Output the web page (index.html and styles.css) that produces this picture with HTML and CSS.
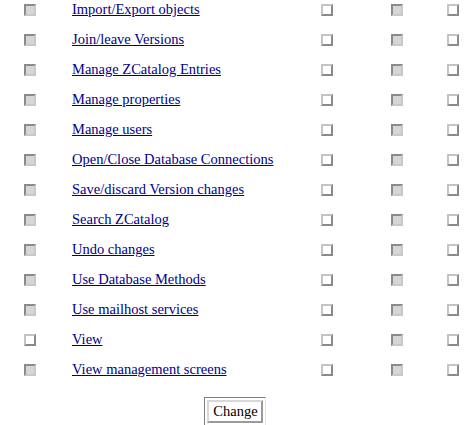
FILE: index.html
```html
<!DOCTYPE html>
<html>
<head>
<meta charset="utf-8">
<link rel="stylesheet" href="styles.css">
</head>
<body>
<div class="perms">
  <div class="row"><span class="cb on"></span><a href="#">Import/Export objects</a><span class="cb"></span><span class="cb on"></span><span class="cb"></span></div>
  <div class="row"><span class="cb on"></span><a href="#">Join/leave Versions</a><span class="cb"></span><span class="cb on"></span><span class="cb"></span></div>
  <div class="row"><span class="cb on"></span><a href="#">Manage ZCatalog Entries</a><span class="cb"></span><span class="cb on"></span><span class="cb"></span></div>
  <div class="row"><span class="cb on"></span><a href="#">Manage properties</a><span class="cb"></span><span class="cb on"></span><span class="cb"></span></div>
  <div class="row"><span class="cb on"></span><a href="#">Manage users</a><span class="cb"></span><span class="cb on"></span><span class="cb"></span></div>
  <div class="row"><span class="cb on"></span><a href="#">Open/Close Database Connections</a><span class="cb"></span><span class="cb on"></span><span class="cb"></span></div>
  <div class="row"><span class="cb on"></span><a href="#">Save/discard Version changes</a><span class="cb"></span><span class="cb on"></span><span class="cb"></span></div>
  <div class="row"><span class="cb on"></span><a href="#">Search ZCatalog</a><span class="cb"></span><span class="cb on"></span><span class="cb"></span></div>
  <div class="row"><span class="cb on"></span><a href="#">Undo changes</a><span class="cb"></span><span class="cb on"></span><span class="cb"></span></div>
  <div class="row"><span class="cb on"></span><a href="#">Use Database Methods</a><span class="cb"></span><span class="cb on"></span><span class="cb"></span></div>
  <div class="row"><span class="cb on"></span><a href="#">Use mailhost services</a><span class="cb"></span><span class="cb on"></span><span class="cb"></span></div>
  <div class="row"><span class="cb"></span><a href="#">View</a><span class="cb"></span><span class="cb on"></span><span class="cb"></span></div>
  <div class="row"><span class="cb on"></span><a href="#">View management screens</a><span class="cb"></span><span class="cb on"></span><span class="cb"></span></div>
</div>
<div class="actions">
  <div class="btnframe"><button class="btn" type="button">Change</button></div>
</div>
</body>
</html>
```
FILE: styles.css
```css
html, body {
  margin: 0;
  padding: 0;
  background: #ffffff;
}
body {
  font-family: "Liberation Serif", "Times New Roman", serif;
  font-size: 14.5px;
  color: #000;
}
.perms {
  display: flex;
  flex-direction: column;
}
.row {
  display: grid;
  grid-template-columns: 48px 249px 70px 56px 12px;
  padding-left: 24px;
  height: 30px;
  align-items: start;
}
.row a {
  color: #00008b;
  text-decoration: underline;
  line-height: 15px;
  padding-top: 2px;
  white-space: nowrap;
}
.cb {
  display: block;
  box-sizing: border-box;
  width: 12px;
  height: 12px;
  margin-top: 4px;
  background: #ffffff;
  border: 2px solid;
  border-color: #c4c4c4 #8a8a8a #8a8a8a #c4c4c4;
}
.cb.on {
  background: #d6d6d6;
  border-color: #8a8a8a #c8c8c8 #c8c8c8 #8a8a8a;
}
.actions {
  display: flex;
  justify-content: center;
  padding-top: 7px;
  padding-left: 2px;
}
.btnframe {
  border: 1px solid;
  border-color: #808080 #e4e4e4 #e4e4e4 #808080;
  padding: 2px;
  background: #fff;
}
.btn {
  display: block;
  font-family: "Liberation Serif", "Times New Roman", serif;
  font-size: 14.5px;
  color: #000;
  background: #ffffff;
  border: 2px solid;
  border-color: #d8d8d8 #9a9a9a #9a9a9a #d8d8d8;
  padding: 1px 3px 2px 4px;
  line-height: 16px;
  margin: 0;
}
```
